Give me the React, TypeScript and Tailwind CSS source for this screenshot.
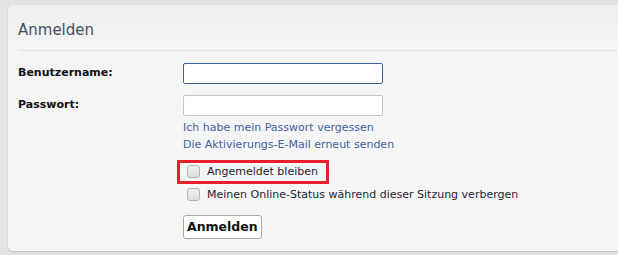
import React from "react";

const font = { fontFamily: '"DejaVu Sans", Verdana, sans-serif' };

function Box() {
  return (
    <span className="inline-block h-[13px] w-[13px] shrink-0 rounded-[3px] border border-[#b4b4b4] bg-gradient-to-b from-[#f0f0f0] to-[#dcdcdc]" />
  );
}

export default function App() {
  return (
    <div className="h-[255px] w-[618px] overflow-hidden bg-[#e4e4e4] pl-[8px] pt-[5px]" style={font}>
      <div className="w-[640px] rounded-[5px] bg-[#f5f5f5] pb-[12px] shadow-[0_1px_2px_rgba(0,0,0,0.18)]">
        <div className="rounded-t-[5px] bg-gradient-to-b from-[#efefef] to-[#f5f5f5] px-[10px]">
          <h2 className="flex h-[46px] items-center border-b border-[#e2e2e2] pt-[5px] text-[15px] text-[#44505f]">
            Anmelden
          </h2>
        </div>

        <div className="grid grid-cols-[165px_1fr] gap-y-[11px] px-[10px] pt-[12px] text-[11px]">
          <label className="flex items-center font-bold text-[#111]">Benutzername:</label>
          <input className="h-[21px] w-[200px] rounded-[2px] border border-[#3b65a5] bg-white outline-none" />
          <label className="flex items-center font-bold text-[#111]">Passwort:</label>
          <input type="password" className="h-[21px] w-[200px] rounded-[2px] border border-[#c6c6c6] bg-white outline-none" />
        </div>

        <div className="ml-[175px] mt-[3px] flex flex-col text-[11px] leading-[17px] text-[#3d5f9c]">
          <a>Ich habe mein Passwort vergessen</a>
          <a>Die Aktivierungs-E-Mail erneut senden</a>
        </div>

        <div className="ml-[175px] mt-[10px] flex flex-col gap-[6px] text-[11px] leading-[17px] text-[#1d1d33]">
          <div className="relative flex items-center gap-[7px] pl-[4px]">
            <Box />
            <span>Angemeldet bleiben</span>
            <span className="absolute left-[-6px] top-[-3px] h-[24px] w-[152px] border-[3px] border-[#e81f2a]" />
          </div>
          <div className="flex items-center gap-[7px] pl-[4px]">
            <Box />
            <span>Meinen Online-Status während dieser Sitzung verbergen</span>
          </div>
        </div>

        <div className="ml-[175px] mt-[11px]">
          <button className="h-[24px] rounded-[3px] border border-[#a9a9a9] bg-white px-[3px] text-[12.5px] font-bold text-[#111]">
            Anmelden
          </button>
        </div>
      </div>
    </div>
  );
}
